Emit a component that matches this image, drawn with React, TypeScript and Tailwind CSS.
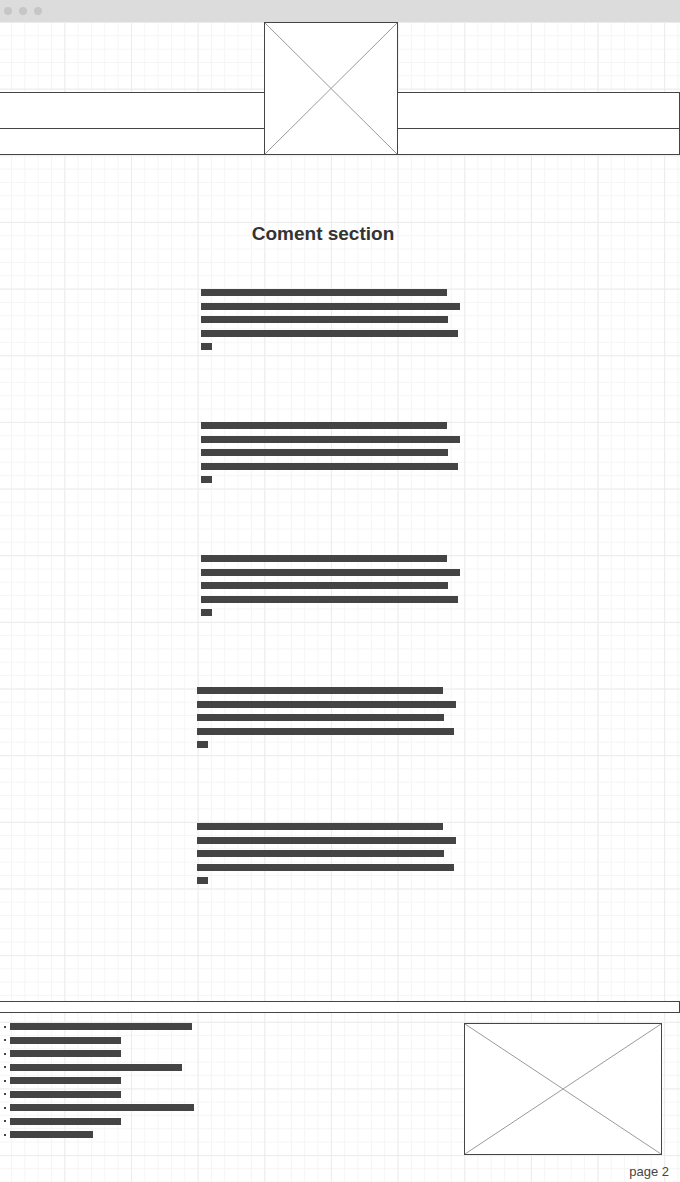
import React from 'react';

// Placeholder image box: white box with a cross
function ImageBox({ className }: { className: string }) {
  return (
    <div className={`relative bg-white border border-[#444] ${className}`}>
      <svg className="absolute inset-0 w-full h-full" viewBox="0 0 100 100" preserveAspectRatio="none">
        <line x1="0" y1="0" x2="100" y2="100" stroke="#9a9a9a" strokeWidth="1" vectorEffect="non-scaling-stroke" />
        <line x1="100" y1="0" x2="0" y2="100" stroke="#9a9a9a" strokeWidth="1" vectorEffect="non-scaling-stroke" />
      </svg>
    </div>
  );
}

// Comment text lines, drawn as bars
function Comment({ className }: { className: string }) {
  const widths = ['w-[246px]', 'w-[259px]', 'w-[247px]', 'w-[257px]', 'w-[11px]'];
  return (
    <div className={`flex flex-col gap-[6.5px] ${className}`}>
      {widths.map((w, i) => (
        <div key={i} className={`h-[7px] bg-[#444] ${w}`} />
      ))}
    </div>
  );
}

const listWidths = [
  'w-[182px]',
  'w-[111px]',
  'w-[111px]',
  'w-[172px]',
  'w-[111px]',
  'w-[111px]',
  'w-[184px]',
  'w-[111px]',
  'w-[83px]',
];

export default function App() {
  return (
    <div className="w-[680px] h-[1182px] overflow-hidden flex flex-col bg-white font-['Liberation_Sans',Arial,sans-serif]">
      {/* Window title bar */}
      <div className="h-[22px] bg-[#dcdcdc] flex items-center gap-[7px] pl-[4px] flex-shrink-0">
        <div className="w-[8px] h-[8px] rounded-full bg-[#c6c6c6]" />
        <div className="w-[8px] h-[8px] rounded-full bg-[#c6c6c6]" />
        <div className="w-[8px] h-[8px] rounded-full bg-[#c6c6c6]" />
      </div>

      {/* Canvas with grid */}
      <div className="flex-1 flex flex-col [background-image:linear-gradient(to_right,#ececec_1px,transparent_1px),linear-gradient(to_bottom,#ececec_1px,transparent_1px),linear-gradient(to_right,#f5f5f5_1px,transparent_1px),linear-gradient(to_bottom,#f5f5f5_1px,transparent_1px)] [background-size:66.667px_66.667px,66.667px_66.667px,13.333px_13.333px,13.333px_13.333px] [background-position:-2.333px_0]">
        {/* Header */}
        <div className="flex items-end h-[133px]">
          <div className="w-[264px] flex flex-col">
            <div className="h-[37px] bg-white border-t border-b border-[#444]" />
            <div className="h-[26px] bg-white border-b border-[#444]" />
          </div>
          <ImageBox className="w-[134px] h-[133px]" />
          <div className="flex-1 flex flex-col">
            <div className="h-[37px] bg-white border-t border-b border-r border-[#444]" />
            <div className="h-[26px] bg-white border-b border-r border-[#444]" />
          </div>
        </div>

        {/* Comments */}
        <h1 className="mt-[68px] h-[22px] leading-[22px] text-[19px] font-bold text-[#333] text-center pr-[34px]">
          Coment section
        </h1>
        <Comment className="mt-[44px] ml-[201px]" />
        <Comment className="mt-[72px] ml-[201px]" />
        <Comment className="mt-[72px] ml-[201px]" />
        <Comment className="mt-[71px] ml-[197px]" />
        <Comment className="mt-[75px] ml-[197px]" />

        {/* Footer */}
        <div className="mt-[117px] h-[12px] bg-white border-t border-b border-r border-[#444]" />
        <div className="mt-[10px] flex justify-between pr-[18px]">
          <ul className="flex flex-col gap-[6.5px]">
            {listWidths.map((w, i) => (
              <li key={i} className="flex items-center h-[7px]">
                <span className="ml-[4px] w-[2px] h-[2px] bg-[#444]" />
                <span className={`ml-[4px] h-[7px] bg-[#444] ${w}`} />
              </li>
            ))}
          </ul>
          <ImageBox className="w-[198px] h-[132px]" />
        </div>
        <div className="mt-[9px] pr-[11px] text-right text-[13px] leading-[15px] text-[#444]">page 2</div>
      </div>
    </div>
  );
}
